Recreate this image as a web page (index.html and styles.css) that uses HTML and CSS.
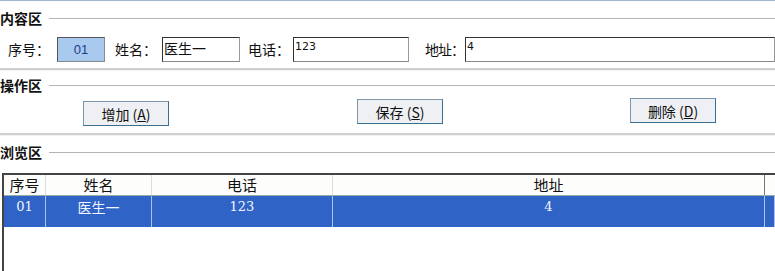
FILE: index.html
```html
<!DOCTYPE html>
<html lang="zh">
<head>
<meta charset="utf-8">
<link rel="stylesheet" href="styles.css">
</head>
<body>
<div class="app">
  <div class="group content">
    <div class="legend"><span class="legend-text">内容区</span><span class="legend-line"></span></div>
    <div class="fields">
      <span class="label l-id">序号：</span>
      <span class="idbox">01</span>
      <span class="label l-name">姓名：</span>
      <span class="input in-name">医生一</span>
      <span class="label l-tel">电话：</span>
      <span class="input in-tel">123</span>
      <span class="label l-addr">地址：</span>
      <span class="input in-addr">4</span>
    </div>
  </div>
  <div class="sep"></div>
  <div class="group ops">
    <div class="legend"><span class="legend-text">操作区</span><span class="legend-line"></span></div>
    <div class="buttons">
      <button class="btn b-add">增加 (<u>A</u>)</button>
      <button class="btn b-save">保存 (<u>S</u>)</button>
      <button class="btn b-del">删除 (<u>D</u>)</button>
    </div>
  </div>
  <div class="sep sep2"></div>
  <div class="group browse">
    <div class="legend"><span class="legend-text">浏览区</span><span class="legend-line"></span></div>
    <div class="grid">
      <div class="row head">
        <div class="c c1">序号</div>
        <div class="c c2">姓名</div>
        <div class="c c3">电话</div>
        <div class="c c4">地址</div>
        <div class="c c5"></div>
      </div>
      <div class="row sel">
        <div class="c c1">01</div>
        <div class="c c2">医生一</div>
        <div class="c c3">123</div>
        <div class="c c4">4</div>
        <div class="c c5"></div>
      </div>
    </div>
  </div>
</div>
</body>
</html>
```
FILE: styles.css
```css
html, body {
  margin: 0;
  padding: 0;
  background: #ffffff;
}
body {
  width: 775px;
  height: 271px;
  overflow: hidden;
  font-family: "Noto Sans CJK SC", "Liberation Sans", sans-serif;
  font-size: 13px;
  color: #111;
}
.app {
  border-top: 1px solid #9fb6cf;
  display: flex;
  flex-direction: column;
}
.legend {
  display: flex;
  align-items: center;
  height: 16px;
}
.legend-text {
  font-weight: bold;
  font-size: 14px;
  line-height: 16px;
  padding-right: 7px;
  letter-spacing: 0;
}
.legend-line {
  flex: 1;
  height: 1px;
  background: #b4b4b4;
}
.content .legend {
  margin-top: 9px;
}
.fields {
  display: flex;
  align-items: center;
  margin-top: 11px;
  height: 25px;
}
.label {
  flex-shrink: 0;
  white-space: nowrap;
  font-size: 14px;
  line-height: 25px;
}
.l-id { margin-left: 8px; width: 49px; }
.l-name { margin-left: 10px; width: 47px; }
.l-tel { margin-left: 8px; width: 45px; }
.l-addr { margin-left: 16px; width: 40px; letter-spacing: -1px; }
.idbox {
  flex-shrink: 0;
  box-sizing: border-box;
  width: 48px;
  height: 25px;
  background: #a9c9ee;
  border: 1px solid #555;
  border-right-color: #8a8a8a;
  border-bottom-color: #8a8a8a;
  text-align: center;
  line-height: 23px;
  font-family: "Liberation Sans", sans-serif;
  font-size: 13px;
  color: #1c3e8a;
}
.input {
  flex-shrink: 0;
  box-sizing: border-box;
  height: 25px;
  background: #fff;
  border: 1px solid #333;
  border-right-color: #999;
  border-bottom-color: #888;
  line-height: 20px;
  padding-left: 1px;
  font-size: 13px;
}
.in-name { width: 78px; font-size: 14px; }
.in-tel { width: 116px; font-family: "DejaVu Sans", sans-serif; font-size: 11px; line-height: 18px; }
.in-addr { flex: 1 1 auto; font-family: "DejaVu Sans", sans-serif; font-size: 11px; line-height: 18px; }
.sep {
  height: 2px;
  background: #cfcfcf;
  margin-top: 6px;
  border-bottom: 1px solid #f1f1f1;
}
.sep2 {
  margin-top: 7px;
}
.ops .legend {
  margin-top: 6px;
}
.buttons {
  display: flex;
  align-items: flex-start;
  height: 33px;
}
.btn {
  flex-shrink: 0;
  box-sizing: border-box;
  width: 86px;
  height: 25px;
  background: #eef0f3;
  border: 1px solid #3a6f94;
  border-top-color: #7c97ab;
  border-left-color: #7c97ab;
  font-family: "Noto Sans CJK SC", sans-serif;
  font-size: 14px;
  color: #111;
  padding: 0;
  line-height: 22px;
}
.btn u { text-underline-offset: 1px; }
.b-add { margin-left: 83px; margin-top: 8px; }
.b-save { margin-left: 188px; margin-top: 6px; }
.b-del { margin-left: 187px; margin-top: 5px; }
.browse .legend {
  margin-top: 8px;
}
.grid {
  margin-top: 13px;
  margin-left: 2px;
  border-top: 2px solid #444;
  border-left: 2px solid #444;
  height: 96px;
}
.row {
  display: flex;
}
.head {
  height: 20px;
  background: #fdfdfb;
  border-bottom: 1px solid #9aa;
}
.sel {
  height: 31px;
  background: #2f63c6;
  color: #f2f5ff;
}
.c {
  box-sizing: border-box;
  text-align: center;
  border-right: 1px solid #c8d6e6;
}
.head .c {
  font-size: 15px;
  line-height: 19px;
  border-right-color: #dcdcdc;
}
.sel .c {
  font-size: 13px;
  line-height: 22px;
  font-family: "DejaVu Serif", "Noto Sans CJK SC", serif;
  border-right: 1px solid #a9c3ea;
}
.sel .c2 { font-family: "Noto Sans CJK SC", sans-serif; font-size: 14px; }
.c1 { width: 42px; }
.c2 { width: 106px; }
.c3 { width: 181px; }
.c4 { width: 432px; }
.c5 { flex: 1; border-right: none; }
.head .c4 { border-right: 1px solid #777; }
```
